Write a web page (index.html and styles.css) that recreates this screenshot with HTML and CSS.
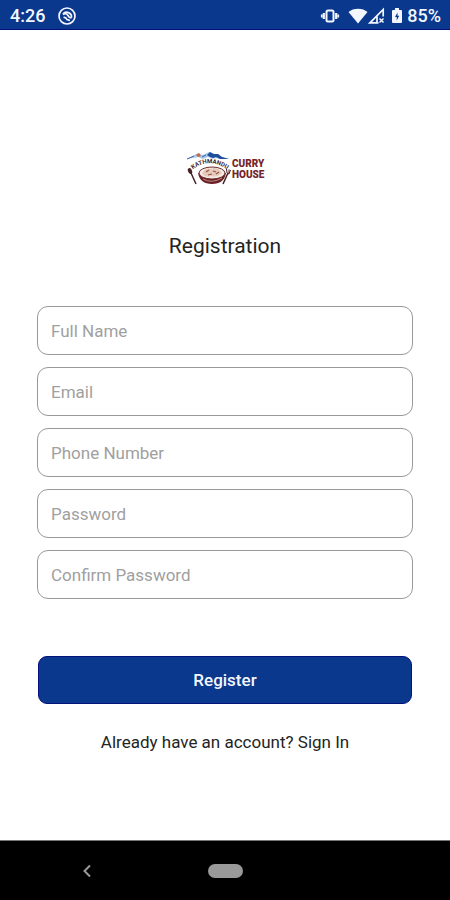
FILE: index.html
```html
<!DOCTYPE html>
<html lang="en">
<head>
<meta charset="utf-8">
<meta name="viewport" content="width=device-width, initial-scale=1">
<title>Registration</title>
<link rel="stylesheet" href="styles.css">
</head>
<body>
<header class="status">
  <span class="clock">4:26</span>
  <svg class="notice" width="20" height="20" viewBox="0 0 20 20" fill="none" stroke="currentColor" aria-hidden="true">
    <circle cx="10" cy="10" r="8" stroke-width="1.700"/>
    <path d="M6 8A4.800 4.800 0 0 1 14.500 11.500M6 8.500Q9 6.500 11 9.500T14.500 11.500M6.500 11.500Q9 11 10 13.500L13 14.500" stroke-width="1.700"/>
  </svg>
  <div class="indicators">
    <svg width="20" height="20" viewBox="0 0 20 20" fill="none" stroke="currentColor" aria-hidden="true">
      <rect x="6.500" y="4.500" width="7" height="11" rx="1.500" stroke-width="2"/>
      <path d="M3.800 7v6M16.200 7v6" stroke-width="2.200"/>
      <path d="M1.800 8.500v3M18.200 8.500v3" stroke-width="1.800"/>
    </svg>
    <svg class="wifi" width="20" height="20" viewBox="0 0 20 20" fill="currentColor" aria-hidden="true">
      <path d="M.5 6C5 1.500 15 1.500 19.500 6L10 17.500Z"/>
    </svg>
    <svg width="17" height="20" viewBox="0 0 17 20" fill="none" stroke="currentColor" aria-hidden="true">
      <path d="M15.200 10.500V3.500L2 16.800H10.500M9 10.500V16" stroke-width="1.700"/>
      <path d="M11.500 12.500l4 4M15.500 12.500l-4 4" stroke-width="1.500"/>
    </svg>
    <svg class="battery" width="12" height="20" viewBox="0 0 12 20" aria-hidden="true">
      <path d="M4 2h4v2h2q1 0 1 1v11q0 1-1 1H2q-1 0-1-1V5q0-1 1-1h2Z" fill="currentColor"/>
      <path class="bolt" d="M6.500 6.500L4 11h1.700v3.500L8.200 9.800h-1.700Z"/>
    </svg>
    <span>85%</span>
  </div>
</header>

<main class="page">
  <svg class="logo" width="80" height="38" viewBox="0 0 80 38" role="img" aria-label="Kathmandu Curry House">
    <defs><path id="arch" d="M5 22.500Q24 6 45 22.500"/></defs>
    <path d="M2 10L8 7L11 5L14 4L17 6L20 5L24 3L28 5L33 5L37 8L44 10L36 10L31 9L27 10L23 8L18 10L13 8L8 9Z" fill="#a9c7ea"/>
    <path d="M22 6L25 3L29 5L33 5L37 8L44 10L35 10L31 8L28 9L25 8Z" fill="#214e9b"/>
    <path d="M11 6L14 4L16 7L13 8Z" fill="#c86b3d"/>
    <path d="M2 10L9 7M17 8L21 6" stroke="#3564a8" fill="none"/>
    <path d="M13 24Q15 35 27 35T41 24Z" fill="#6b2026"/>
    <ellipse cx="27" cy="24" rx="13" ry="6" fill="#f4ebe5" stroke="#702d2e"/>
    <path d="M17 25Q20 18 26 20Q32 17 37 24Q32 29 26 27Q21 29 17 25Z" fill="#e6cabb"/>
    <path d="M21 23l3-2M28 22l3 1M23 26l4-1M31 25l3-2" stroke="#985344" stroke-width="1.200"/>
    <path d="M18 30Q27 35 37 29" stroke="#bd8c83" fill="none"/>
    <text class="logo-arch"><textPath href="#arch" startOffset="50%">KATHMANDU</textPath></text>
    <ellipse cx="5" cy="22" rx="2" ry="3" transform="rotate(-24 5 22)" fill="#462126"/>
    <path d="M6 24L11 35M43 24L38 35" stroke="#462126" stroke-width="1.500"/>
    <path d="M41.500 20l.5 4 2 1 1.500-4M44 20.500v3.500" stroke="#462126" fill="none"/>
    <text class="logo-name" x="47" y="18">CURRY</text>
    <text class="logo-name" x="47" y="29">HOUSE</text>
  </svg>
  <h1 class="title">Registration</h1>
  <form class="form">
    <div class="fields">
      <input type="text" placeholder="Full Name" aria-label="Full Name">
      <input type="email" placeholder="Email" aria-label="Email">
      <input type="tel" placeholder="Phone Number" aria-label="Phone Number">
      <input type="password" placeholder="Password" aria-label="Password">
      <input type="password" placeholder="Confirm Password" aria-label="Confirm Password">
    </div>
    <button class="register" type="submit">Register</button>
  </form>
  <p class="signin">Already have an account? <a href="#">Sign In</a></p>
</main>

<nav class="navbar" aria-label="System">
  <button class="back" type="button" aria-label="Back">
    <svg width="10" height="14" viewBox="0 0 10 14" fill="none" stroke="currentColor" stroke-width="2" aria-hidden="true"><path d="M8 1.500L2.500 7L8 12.500"/></svg>
  </button>
  <button class="home" type="button" aria-label="Home"></button>
</nav>
</body>
</html>
```
FILE: styles.css
```css
* {
  box-sizing: border-box;
}

body {
  margin: 0;
  min-height: 100vh;
  display: flex;
  flex-direction: column;
  background: #fff;
  color: #242424;
  font-family: Roboto, "Liberation Sans", sans-serif;
}

.status {
  display: flex;
  align-items: center;
  height: 30px;
  padding: 2px 9px 0 10px;
  background: #09388d;
  border-bottom: 1px solid #04107c;
  color: #f4f6ff;
  font-size: 18px;
  font-weight: 500;
}

.notice {
  margin-left: 12px;
}

.indicators {
  display: flex;
  align-items: center;
  margin-left: auto;
}

.wifi {
  margin-left: 8px;
}

.battery {
  margin: 0 4px 0 6px;
}

.bolt {
  fill: #09388d;
}

.page {
  flex: 1;
  display: flex;
  flex-direction: column;
  padding: 119px 37px 0;
}

.logo {
  align-self: center;
}

.logo-arch {
  fill: #3b2630;
  font-size: 6px;
  font-weight: 700;
  text-anchor: middle;
}

.logo-name {
  fill: #752529;
  font-size: 10px;
  font-weight: 900;
}

.title {
  margin: 45px 0 0;
  font-size: 21px;
  font-weight: 400;
  line-height: 28px;
  text-align: center;
}

.form,
.fields {
  display: flex;
  flex-direction: column;
}

.fields {
  gap: 12px;
  margin-top: 46px;
}

.fields input {
  width: 100%;
  height: 49px;
  padding: 0 13px;
  border: 1px solid #999;
  border-radius: 11px;
  background: #fff;
  color: #242424;
  font: inherit;
  font-size: 17px;
}

.fields input::placeholder {
  color: #a0a0a0;
  opacity: 1;
}

.register {
  height: 48px;
  margin: 57px 1px 0;
  border: 1px solid #04107c;
  border-radius: 9px;
  background: #09388d;
  color: #f4f6ff;
  font: inherit;
  font-size: 17px;
  font-weight: 500;
}

.signin {
  margin: 26px 0 0;
  font-size: 17px;
  line-height: 24px;
  text-align: center;
}

.signin a {
  color: inherit;
  text-decoration: none;
}

.navbar {
  display: grid;
  grid-template-columns: 1fr auto 1fr;
  align-items: center;
  height: 60px;
  border-top: 1px solid #777;
  background: #000;
  color: #999;
}

.navbar button {
  padding: 0;
  border: 0;
  color: inherit;
}

.back {
  display: flex;
  justify-self: center;
  margin-right: 34px;
  background: none;
}

.navbar .home {
  width: 35px;
  height: 14px;
  border-radius: 7px;
  background: #999;
}
```
